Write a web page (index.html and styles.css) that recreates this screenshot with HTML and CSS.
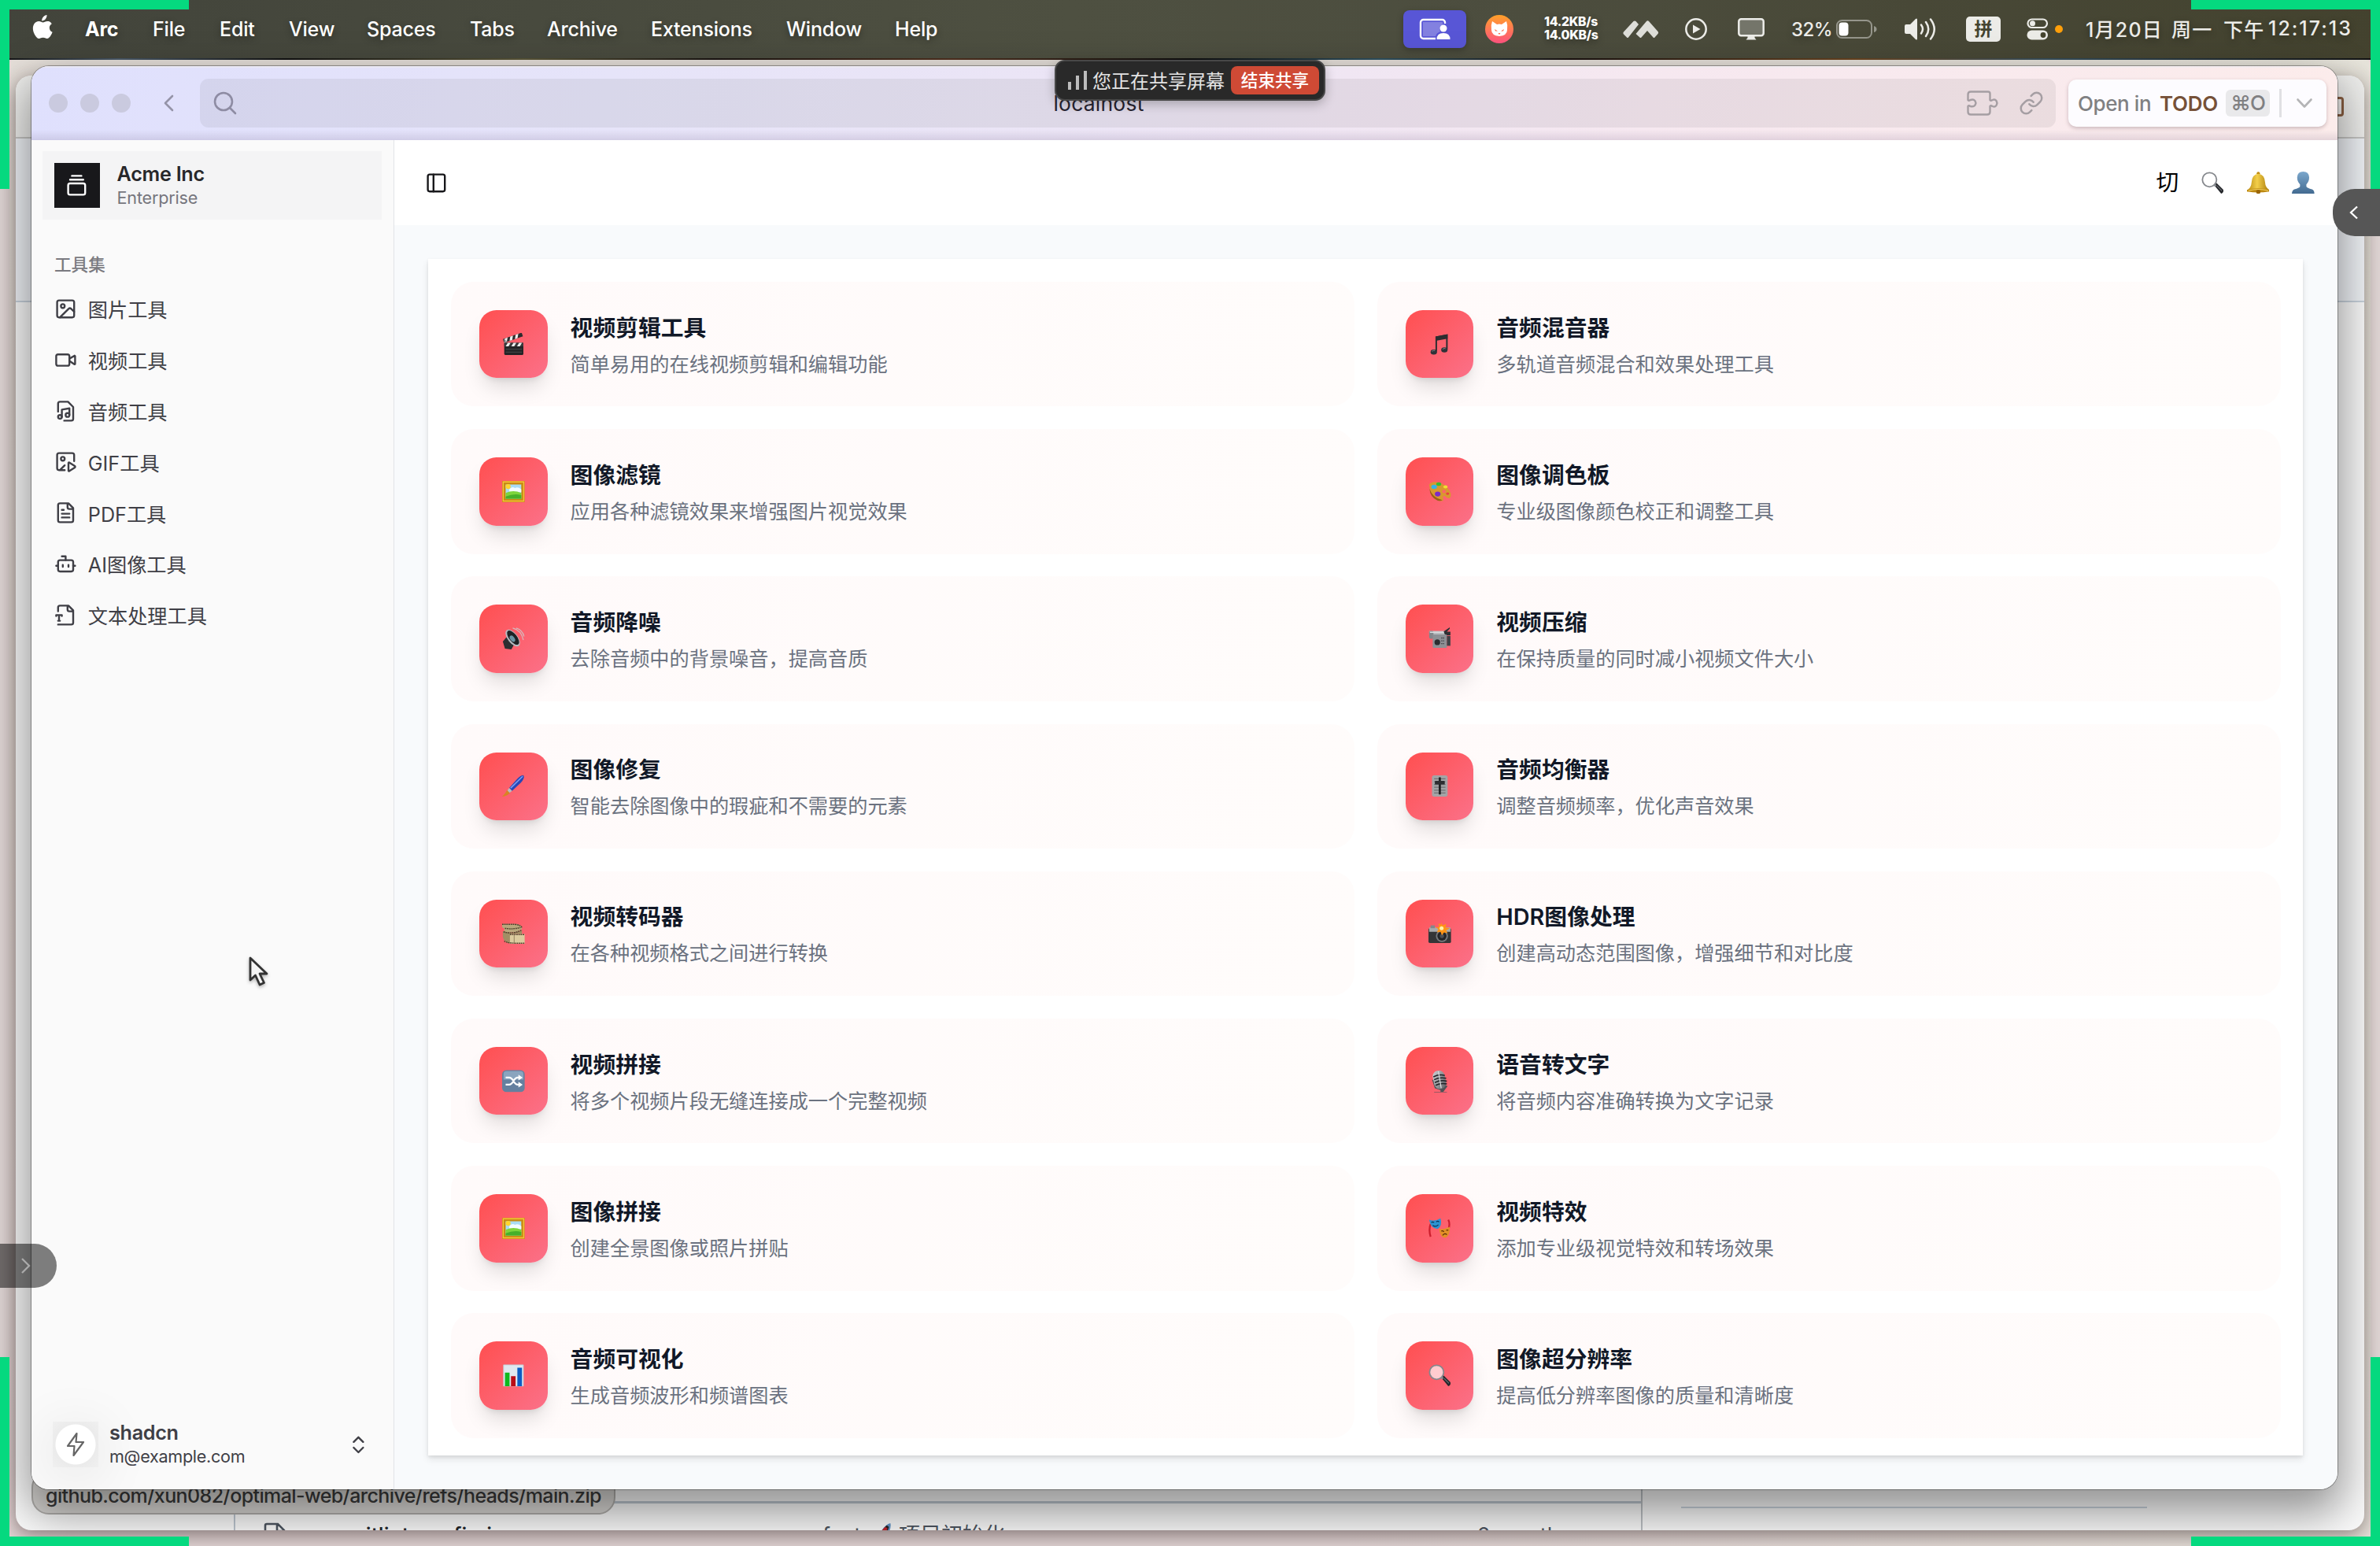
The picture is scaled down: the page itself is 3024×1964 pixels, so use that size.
FILE: index.html
```html
<!DOCTYPE html>
<html lang="zh-CN">
<head>
<meta charset="utf-8">
<title>Acme Inc</title>
<link rel="stylesheet" href="styles.css">
</head>
<body>
<svg class="defs" aria-hidden="true">
  <defs>
    <linearGradient id="gold" x1="0" y1="0" x2="1" y2="0"><stop offset="0" stop-color="#b98a12"/><stop offset=".45" stop-color="#f3cf4a"/><stop offset="1" stop-color="#a87808"/></linearGradient>
    <linearGradient id="person" x1="0" y1="0" x2="0" y2="1"><stop offset="0" stop-color="#7ba7cc"/><stop offset="1" stop-color="#41698f"/></linearGradient>
    <linearGradient id="steel" x1="0" y1="0" x2="1" y2="1"><stop offset="0" stop-color="#d4d6d9"/><stop offset="1" stop-color="#55585e"/></linearGradient>
    <linearGradient id="cat" x1="0" y1="0" x2="0" y2="1"><stop offset="0" stop-color="#ffa029"/><stop offset="1" stop-color="#ff5380"/></linearGradient>
  </defs>
  <symbol id="e-clapper" viewBox="0 0 32 32">
    <g transform="rotate(-19 4 14)"><rect x="3" y="8" width="28" height="5.5" fill="#2b2b2d"/><path d="M6 8h4l-3 5.5H3zM14 8h4l-3 5.5h-4zM22 8h4l-3 5.5h-4z" fill="#eee"/></g>
    <path d="M2 8l5 4-2 4z" fill="#8d8f92"/><rect x="3" y="14" width="27" height="17" rx="1.5" fill="#242426"/>
    <path d="M3 14h27v5H3z" fill="#3a3a3c"/><path d="M8 14h4l-3 5H5zM16 14h4l-3 5h-4zM24 14h4l-3 5h-4z" fill="#eee"/><path d="M5 23h23M5 27h23" stroke="#4d4d50"/>
  </symbol>
  <symbol id="e-note" viewBox="0 0 32 32"><path d="M11 26V6l15-3v20" fill="none" stroke="#2c2d30" stroke-width="2.2"/><path d="M10 5l17-3v6L10 11z" fill="#2c2d30"/><ellipse cx="7.500" cy="27" rx="4.500" ry="3.600" fill="#303238"/><ellipse cx="22.500" cy="24" rx="4.500" ry="3.600" fill="#303238"/><path d="M5 26q2-2 4-1M20 23q2-2 4-1" stroke="#8b8d92" fill="none"/></symbol>
  <symbol id="e-frame" viewBox="0 0 32 32"><path d="M0 1h32v30H0z" fill="#c98b12"/><path d="M1.500 2.500h29v27h-29z" fill="none" stroke="#f4c33a" stroke-width="1.500"/><path d="M5 6h22v20H5z" fill="#a9dcf5"/><circle cx="8.500" cy="9" r="3.500" fill="#ffd52e"/><path d="M10 13q4-5 8-2 5-2 9 2v4H10z" fill="#f3fbff"/><path d="M5 18q11-5 22 0v8H5z" fill="#7dd53c"/><path d="M5 23q12-5 22-2v5H5z" fill="#46b02a"/></symbol>
  <symbol id="e-palette" viewBox="0 0 32 32"><path d="M1 6Q5 1 14 3q14 4 17.500 16 1 6-3 6.500-4-.5-5-3-2.500-1-3 1-.5 2 1 4-2 3.500-8 1Q2 23 1 6z" fill="#d8982f"/><path d="M1.500 12q4 13 18 16-2 2-7 .5Q2 24 1.500 12z" fill="#9b6015"/><ellipse cx="22" cy="16" rx="2.500" ry="2.300" fill="#fb6269"/><ellipse cx="8" cy="9.500" rx="4" ry="3" fill="#35b4e6"/><ellipse cx="14.500" cy="5.500" rx="3.500" ry="2.500" fill="#39bb32"/><ellipse cx="24" cy="9.500" rx="3" ry="2.300" fill="#f2dc33"/><ellipse cx="13" cy="19.500" rx="4" ry="3.500" fill="#7c2bc8"/><ellipse cx="27" cy="19" rx="2.300" ry="1.800" fill="#e9403f"/></symbol>
  <symbol id="e-speaker" viewBox="0 0 32 32"><path d="M1 20l5-6 11 10-4 7-9-1z" fill="#2d2e31"/><ellipse cx="15" cy="15" rx="7" ry="14" transform="rotate(-38 15 15)" fill="#b6babf"/><ellipse cx="15.500" cy="14.500" rx="5.500" ry="12" transform="rotate(-38 15.500 14.500)" fill="#1f2124"/><ellipse cx="14.500" cy="16" rx="3" ry="5" transform="rotate(-38 14.500 16)" fill="#6b94a4"/><path d="M15 1q12 3 15 17M20 1q9 3 11 12" fill="none" stroke="#d5babd" stroke-width="1.300"/></symbol>
  <symbol id="e-video" viewBox="0 0 32 32"><path d="M1 5h24l2 5H1z" fill="#b8bbbf"/><path d="M21 6l9-6v2l-4 4h5v5h-7z" fill="#2e2f33"/><rect x="1" y="5" width="6" height="11" rx="2" fill="#83868b"/><rect x="6" y="10" width="20" height="19" rx="1.500" fill="#8d9095"/><path d="M2 7h20" stroke="#d9dbde" stroke-width="1.500"/><circle cx="12.500" cy="21" r="4" fill="#2b2c30"/><path d="M18 15h4M18 19h4M18 23h4" stroke="#3b3d42" stroke-width="1.500" stroke-dasharray="1.500 1"/><rect x="26" y="12" width="5" height="14" fill="#404247"/></symbol>
  <symbol id="e-brush" viewBox="0 0 32 32"><path d="M30.500 1.500q1.500 4-4 10L14 23l-4-4L21 6.500Q27 0 30.500 1.500z" fill="#2747b8"/><path d="M29 2.500L12 19" stroke="#7d9bf0" stroke-width="1.800"/><path d="M10 19l4 4-4 3-3-3z" fill="#b9bcc2"/><path d="M7 22l4 4q-4 4-11 5 4-3 7-9z" fill="#d98324"/></symbol>
  <symbol id="e-slider" viewBox="0 0 32 32"><rect x="5" y="1" width="22" height="30" rx="3" fill="#a3a4a6"/><path d="M8 6h16M8 10h16M8 14h16M8 18h16M8 22h16M8 26h16" stroke="#6f7073" stroke-width="1.300"/><path d="M16 4v24" stroke="#1f2022" stroke-width="3"/><rect x="9" y="9" width="14" height="5" rx="1" fill="#2c2d30"/></symbol>
  <symbol id="e-film" viewBox="0 0 32 32"><path d="M0 2h14q14-1 14 6-1 5-12 6H3V8q-2 0-3-2z" fill="#b9a77c"/><path d="M1 12q8 3 17 2 8-1 10-4v6H12v14Q2 28 1 20z" fill="#a18e64"/><path d="M11 16h21v14H11z" fill="#dccb9f"/><path d="M0 2.500h18q9 1 10 5M4 8q10 2 22-1M2 13q12 4 25-2M11 17h21M3 26q4 4 29 3" stroke="#493c29" stroke-width="1.600" stroke-dasharray="2 1" fill="none"/><path d="M17 17v12" stroke="#8e7d59"/></symbol>
  <symbol id="e-camera" viewBox="0 0 32 32"><rect x="0" y="8" width="32" height="21" rx="2" fill="#343537"/><path d="M1 7h30v6H1z" fill="#a9abad"/><rect x="3" y="4" width="6" height="4" fill="#85878a"/><circle cx="19" cy="19" r="8.500" fill="#787a7d"/><circle cx="19" cy="19" r="6.500" fill="#242528"/><circle cx="19" cy="19" r="3" fill="#4c4f56"/><path d="M18 0l2 4 5-2-1 5 6 1-5 3 2 4-5-1-3 4-2-5-5 1 2-5-4-2 5-1-1-5 4 2z" fill="#ff9416"/><circle cx="18.500" cy="8" r="2.800" fill="#fff2a8"/></symbol>
  <symbol id="e-shuffle" viewBox="0 0 32 32"><rect width="32" height="31" y=".5" rx="6" fill="#64809f"/><path d="M2 6q0-4 4-4h20q4 0 4 4v8H2z" fill="#8aa4be"/><path d="M5 11h5q3 0 6 5t6 5h3M5 21h5q3 0 6-5t6-5h3" fill="none" stroke="#fff" stroke-width="2.400"/><path d="M23 7l6 4-6 4zM23 17l6 4-6 4z" fill="#fff"/></symbol>
  <symbol id="e-mic" viewBox="0 0 32 32"><path d="M5 14l4 12 8 3v2H8v1h18v-1h-5l6-8" fill="#4f5256"/><rect x="7" y="1" width="17" height="26" rx="8" transform="rotate(-12 16 14)" fill="url(#steel)"/><path d="M7 10q8-4 16-2M8 14q8-4 17-2M9 18q8-4 17-2M10 22q8-4 16-2" fill="none" stroke="#202226" stroke-width="1.700"/><path d="M14 2l4 24" stroke="#e4e5e7" stroke-width="1.200"/></symbol>
  <symbol id="e-masks" viewBox="0 0 32 32"><path d="M3 10q-3 8 0 18M28 4q3 6 0 14" fill="none" stroke="#cc1e2d" stroke-width="2.500"/><path d="M1 4q8 3 16-2 3 10-4 15Q3 17 1 4z" fill="#2b93d1"/><path d="M4 8q2-2 4 0M11 7q2-2 4 0M6 12q4 3 8-1" fill="none" stroke="#0d3158" stroke-width="1.300"/><path d="M15 17q7 1 15-3 1 11-5 15-8 2-10-12z" fill="#e39027"/><path d="M18 20q2-1 4 1M25 19q2-1 3 0M20 26q3-4 6-1" fill="none" stroke="#5e2c08" stroke-width="1.300"/></symbol>
  <symbol id="e-chart" viewBox="0 0 32 32"><path d="M2 1h28v30H2z" fill="#dfe8f0"/><path d="M2 1h28v30H2z" fill="none" stroke="#c3cbd3"/><path d="M4 12h6.500v19H4z" fill="#10b81e"/><path d="M12.500 17H19v14h-6.500z" fill="#b90c16"/><path d="M21.500 5H28v26h-6.500z" fill="#0b5cc4"/></symbol>
  <symbol id="e-search" viewBox="0 0 32 32"><path d="M18 19l3.500-3L31 25.500q1 4-3 5.500z" fill="#25272b"/><path d="M17.500 17.500l3 3" stroke="#888b90" stroke-width="3"/><circle cx="11.500" cy="11.500" r="10" fill="#fff" fill-opacity=".68" stroke="#85888d" stroke-width="2"/><path d="M22 20l7 7" stroke="#6a6d72" stroke-width="1.200"/></symbol>
  <symbol id="e-bell" viewBox="0 0 32 32"><circle cx="16" cy="2.500" r="2.300" fill="#c08d12"/><path d="M16 3q9 1 9.500 12 .5 8 6.500 11v2H0v-2q6-3 6.500-11Q7 4 16 3z" fill="url(#gold)"/><path d="M0 26q16-5 32 0v2q-16 3-32 0z" fill="#bd8810"/><path d="M2 27q14-4 28 0" fill="none" stroke="#f4d465" stroke-width="1.200"/><circle cx="16" cy="28.500" r="3" fill="#9b6708"/></symbol>
  <symbol id="e-person" viewBox="0 0 32 32"><path d="M16 0q8 0 8.500 8 0 6-4 10v3q1 2 8 4 3.500 1.500 3.500 7H0q0-5.500 3.500-7 7-2 8-4v-3q-4-4-4-10Q8 0 16 0z" fill="url(#person)"/></symbol>
</svg>

<div class="desktop">
  <header class="menubar">
    <nav class="menus">
      <svg class="apple" viewBox="0 0 28 34"><path fill="#fff" d="M19.500 1c.2 2-.6 3.900-1.700 5.200-1.200 1.400-3 2.300-4.600 2.200-.2-1.900.7-3.800 1.800-5C16.200 2.100 18 1.200 19.500 1zM25.800 12.200c-2 1.200-3 2.800-3 5.100 0 2.600 1.500 4.600 3.800 5.500-.5 1.500-1.200 3-2.200 4.400-1.300 1.900-2.600 3.800-4.700 3.800-2 0-2.600-1.200-5-1.200s-3.200 1.200-5.100 1.300c-2 .1-3.500-2-4.900-4C2 23 .6 16.800 3.300 12.600c1.300-2.200 3.700-3.500 6.100-3.500 2.200 0 3.900 1.400 5.300 1.400 1.300 0 3.400-1.600 6-1.400 1.100 0 3.500.4 5.100 3.100z"/></svg>
      <b>Arc</b><span>File</span><span>Edit</span><span>View</span><span>Spaces</span><span>Tabs</span><span>Archive</span><span>Extensions</span><span>Window</span><span>Help</span>
    </nav>
    <div class="status">
      <span class="sharebadge"><svg width="40" height="28" viewBox="0 0 40 28"><path d="M33 7V5.500A3.500 3.500 0 0 0 29.500 2h-24A3.500 3.500 0 0 0 2 5.500v17A3.500 3.500 0 0 0 5.500 26H21" fill="none" stroke="#fff" stroke-width="2.400"/><path d="M5 5h25v3q-5 5-3 9-5 2-6 6H5z" fill="#8381e0"/><circle cx="31" cy="13" r="4.500" fill="#fff"/><path d="M22.500 27q0-8 8.500-8t8.500 8z" fill="#fff"/></svg></span>
      <svg class="cat" width="36" height="36" viewBox="0 0 36 36"><circle cx="18" cy="18" r="18" fill="url(#cat)"/><path d="M9 8l6 4q3-1 6 0l6-4q2 5 1 11 0 7-10 8-10-1-10-8-1-6 1-11z" fill="#fff"/><path d="M12 18l4 2.500h-3zM24 18l-4 2.500h3zM16.500 23h3L18 25z" fill="#ff6a48"/></svg>
      <span class="speed">14.2KB/s<br>14.0KB/s</span>
      <svg width="46" height="24" viewBox="0 0 46 24"><path d="M1 15.500L13.500 2q1.500-1.200 3 0l3.500 4L7 22.500q-1 1-2 0l-4-4q-1.200-1.500 0-3zM16.500 18L30 2q1.500-1.500 3 0l11.500 13q1.200 1.500 0 3l-4 4.500q-1 1-2 0L31 14l-7.500 8.500q-1 1-2 0z" fill="#deded9"/></svg>
      <svg width="30" height="30" viewBox="0 0 30 30"><circle cx="15" cy="15" r="12.700" fill="none" stroke="#ecece8" stroke-width="2.500"/><path d="M11 9.500l9.500 5.500-9.500 5.500z" fill="#ecece8"/></svg>
      <svg width="36" height="30" viewBox="0 0 36 30"><rect x="2.300" y="2.300" width="31.400" height="21" rx="3" fill="#74756a" stroke="#ecece8" stroke-width="2.500"/><path d="M13.500 23h9v3l2 2.500h-13l2-2.500z" fill="#ecece8"/></svg>
      <span class="pct">32%</span>
      <svg width="54" height="26" viewBox="0 0 54 26"><rect x="2" y="2" width="44" height="22" rx="6.500" fill="none" stroke="#96968c" stroke-width="2"/><rect x="4.500" y="4.500" width="12" height="17" rx="4" fill="#fff"/><path d="M49 9q3.500 1 3.500 4T49 17z" fill="#96968c"/></svg>
      <svg width="42" height="30" viewBox="0 0 42 30"><path d="M1 11q0-2 2-2h5l7-7q2-1.500 2 1v24q0 2.500-2 1l-7-7H3q-2 0-2-2z" fill="#ecece8"/><path d="M22 9.500q4 5.500 0 11M28 6q6.500 9 0 18M34 2.500q9.500 12.500 0 25" fill="none" stroke="#ecece8" stroke-width="2.500" stroke-linecap="round"/></svg>
      <span class="ime">拼</span>
      <svg width="28" height="28" viewBox="0 0 28 28"><rect x="1.500" y="1.500" width="24.500" height="10.500" rx="5.250" fill="none" stroke="#ecece8" stroke-width="2.200"/><circle cx="7.500" cy="6.800" r="3.500" fill="#ecece8"/><rect x=".5" y="15.500" width="26.500" height="12" rx="6" fill="#ecece8"/><circle cx="21" cy="21.500" r="3.400" fill="#45442f"/></svg>
      <i class="dot"></i>
      <span class="date">1月20日</span><span class="date">周一</span><span class="date">下午</span><span class="date clock">12:17:13</span>
    </div>
  </header>
  <div class="wallpaper"></div>

  <section class="backwin">
    <div class="backpage">
      <div class="backbar"><i class="backicon"></i></div>
      <div class="backhead"></div>
      <div class="backbody">
        <div class="backleft"></div>
        <div class="backfiles">
          <div class="filerow">
            <svg width="28" height="32" viewBox="0 0 28 32"><path d="M2 32V4q0-2 2-2h14l8 8v22M17 2v9h9" fill="none" stroke="#4d5560" stroke-width="2.600"/></svg>
            <span class="fname">commitlint.config.js</span>
            <span class="fmsg">feat: <svg class="rocket" viewBox="0 0 24 32"><path d="M22 1q2 9-8 21l-7-6Q14 3 22 1z" fill="#5f93c8"/><path d="M17 4q-6 5-9 14l4 3q6-7 8-15z" fill="#26211f"/><path d="M15 6q-6 5-8 14l4 2q5-7 7-14z" fill="#c2232a"/><path d="M7 15l8 7-3 8H4z" fill="#26211f"/></svg>项目初始化</span>
            <span class="fdate">2 months ago</span>
          </div>
        </div>
        <div class="backside"><hr></div>
      </div>
    </div>
    <div class="linkstatus">github.com/xun082/optimal-web/archive/refs/heads/main.zip</div>
  </section>

  <main class="window">
    <div class="toolbar">
      <div class="lights"><i></i><i></i><i></i></div>
      <svg class="back" width="16" height="24" viewBox="0 0 16 24"><path d="M13 3L4 12l9 9" fill="none" stroke="#9594a8" stroke-width="2.600" stroke-linecap="round" stroke-linejoin="round"/></svg>
      <div class="urlbar">
        <svg width="30" height="30" viewBox="0 0 30 30"><circle cx="13" cy="13" r="11" fill="none" stroke="#8e8ca3" stroke-width="2.600"/><path d="M21 21l7 7" stroke="#8e8ca3" stroke-width="2.600" stroke-linecap="round"/></svg>
        <span class="host">localhost</span>
        <svg class="puzzle" width="40" height="32" viewBox="0 0 40 32"><path d="M1.500 12V5q0-3.500 3.500-3.500h22q2.500 0 2.500 2.500v8q1 1.500 3 0 5-2 6 4-1 6-6 4-2-1.500-3 0v7q0 3.500-3.500 3.500H5q-3.500 0-3.500-3.500v-7q1-1.500 3 0 6 1.500 7-4-1-6-7-4-2 1.500-3 0z" fill="none" stroke="#a59ea3" stroke-width="2.400"/></svg>
        <svg class="link" width="32" height="32" viewBox="0 0 24 24"><path d="M10 13a5 5 0 0 0 7.540.540l3-3a5 5 0 0 0-7.070-7.070l-1.720 1.710M14 11a5 5 0 0 0-7.540-.540l-3 3a5 5 0 0 0 7.070 7.070l1.710-1.710" fill="none" stroke="#a59ea3" stroke-width="1.900" stroke-linecap="round"/></svg>
      </div>
      <div class="openin">
        <span>Open in</span><b>TODO</b><kbd>⌘O</kbd><i class="sep"></i>
        <svg width="22" height="14" viewBox="0 0 22 14"><path d="M2.500 2.500l8.500 9 8.500-9" fill="none" stroke="#b4b4b6" stroke-width="2.600" stroke-linecap="round" stroke-linejoin="round"/></svg>
      </div>
    </div>

    <div class="app">
      <aside class="sidebar">
        <div class="team">
          <span class="logo"><svg class="ico" viewBox="0 0 24 24"><path d="M7 2h10M5 6h14"/><rect x="3" y="10" width="18" height="12" rx="2"/></svg></span>
          <div><p class="name">Acme Inc</p><p class="sub">Enterprise</p></div>
        </div>
        <p class="label">工具集</p>
        <ul class="nav">
          <li><svg class="ico" viewBox="0 0 24 24"><rect x="3" y="3" width="18" height="18" rx="2"/><circle cx="9" cy="9" r="2"/><path d="m21 15-3.086-3.086a2 2 0 0 0-2.828 0L6 21"/></svg>图片工具</li>
          <li><svg class="ico" viewBox="0 0 24 24"><path d="m16 13 5.223 3.482a.5.5 0 0 0 .777-.416V7.870a.5.5 0 0 0-.752-.432L16 10.500"/><rect x="2" y="6" width="14" height="12" rx="2"/></svg>视频工具</li>
          <li><svg class="ico" viewBox="0 0 24 24"><circle cx="14" cy="16" r="2"/><circle cx="6" cy="18" r="2"/><path d="M4 12.400V4a2 2 0 0 1 2-2h8.500L20 7.500V20a2 2 0 0 1-2 2h-7.500M8 18v-7.700L16 9v7"/></svg>音频工具</li>
          <li><svg class="ico" viewBox="0 0 24 24"><path d="m11 16-5 5M11 21H5a2 2 0 0 1-2-2V5a2 2 0 0 1 2-2h14a2 2 0 0 1 2 2v6.500"/><path d="M15.765 22a.5.5 0 0 1-.765-.424V13.380a.5.5 0 0 1 .765-.424l5.878 3.674a1 1 0 0 1 0 1.696z"/><circle cx="9" cy="9" r="2"/></svg>GIF工具</li>
          <li><svg class="ico" viewBox="0 0 24 24"><path d="M15 2H6a2 2 0 0 0-2 2v16a2 2 0 0 0 2 2h12a2 2 0 0 0 2-2V7ZM14 2v4a2 2 0 0 0 2 2h4M10 9H8M16 13H8M16 17H8"/></svg>PDF工具</li>
          <li><svg class="ico" viewBox="0 0 24 24"><path d="M12 8V4H8M2 14h2M20 14h2M15 13v2M9 13v2"/><rect x="4" y="8" width="16" height="12" rx="2"/></svg>AI图像工具</li>
          <li><svg class="ico" viewBox="0 0 24 24"><path d="M4 22h14a2 2 0 0 0 2-2V7l-5-5H6a2 2 0 0 0-2 2v4M14 2v4a2 2 0 0 0 2 2h4M2 13v-1h6v1M5 12v6M4 18h2"/></svg>文本处理工具</li>
        </ul>
        <div class="user">
          <span class="avatar"><svg width="28" height="34" viewBox="0 0 28 34"><path d="M15.500 3L4 19h8.500l-1 12L24 14h-9.500z" fill="none" stroke="#666" stroke-width="2.200" stroke-linejoin="round"/></svg></span>
          <div><p class="name">shadcn</p><p class="mail">m@example.com</p></div>
          <svg class="ico" viewBox="0 0 24 24"><path d="m7 15 5 5 5-5M7 9l5-5 5 5"/></svg>
        </div>
      </aside>

      <section class="content">
        <header class="apphead">
          <svg class="ico" viewBox="0 0 24 24"><rect x="3" y="3" width="18" height="18" rx="2"/><path d="M9 3v18"/></svg>
          <div class="actions"><span>切</span><svg><use href="#e-search"/></svg><svg><use href="#e-bell"/></svg><svg><use href="#e-person"/></svg></div>
        </header>
        <div class="stage">
          <div class="panel">
            <article class="card"><span class="tile"><svg><use href="#e-clapper"/></svg></span><div><h3>视频剪辑工具</h3><p>简单易用的在线视频剪辑和编辑功能</p></div></article>
            <article class="card"><span class="tile"><svg><use href="#e-note"/></svg></span><div><h3>音频混音器</h3><p>多轨道音频混合和效果处理工具</p></div></article>
            <article class="card"><span class="tile"><svg><use href="#e-frame"/></svg></span><div><h3>图像滤镜</h3><p>应用各种滤镜效果来增强图片视觉效果</p></div></article>
            <article class="card"><span class="tile"><svg><use href="#e-palette"/></svg></span><div><h3>图像调色板</h3><p>专业级图像颜色校正和调整工具</p></div></article>
            <article class="card"><span class="tile"><svg><use href="#e-speaker"/></svg></span><div><h3>音频降噪</h3><p>去除音频中的背景噪音，提高音质</p></div></article>
            <article class="card"><span class="tile"><svg><use href="#e-video"/></svg></span><div><h3>视频压缩</h3><p>在保持质量的同时减小视频文件大小</p></div></article>
            <article class="card"><span class="tile"><svg><use href="#e-brush"/></svg></span><div><h3>图像修复</h3><p>智能去除图像中的瑕疵和不需要的元素</p></div></article>
            <article class="card"><span class="tile"><svg><use href="#e-slider"/></svg></span><div><h3>音频均衡器</h3><p>调整音频频率，优化声音效果</p></div></article>
            <article class="card"><span class="tile"><svg><use href="#e-film"/></svg></span><div><h3>视频转码器</h3><p>在各种视频格式之间进行转换</p></div></article>
            <article class="card"><span class="tile"><svg><use href="#e-camera"/></svg></span><div><h3>HDR图像处理</h3><p>创建高动态范围图像，增强细节和对比度</p></div></article>
            <article class="card"><span class="tile"><svg><use href="#e-shuffle"/></svg></span><div><h3>视频拼接</h3><p>将多个视频片段无缝连接成一个完整视频</p></div></article>
            <article class="card"><span class="tile"><svg><use href="#e-mic"/></svg></span><div><h3>语音转文字</h3><p>将音频内容准确转换为文字记录</p></div></article>
            <article class="card"><span class="tile"><svg><use href="#e-frame"/></svg></span><div><h3>图像拼接</h3><p>创建全景图像或照片拼贴</p></div></article>
            <article class="card"><span class="tile"><svg><use href="#e-masks"/></svg></span><div><h3>视频特效</h3><p>添加专业级视觉特效和转场效果</p></div></article>
            <article class="card"><span class="tile"><svg><use href="#e-chart"/></svg></span><div><h3>音频可视化</h3><p>生成音频波形和频谱图表</p></div></article>
            <article class="card"><span class="tile"><svg><use href="#e-search"/></svg></span><div><h3>图像超分辨率</h3><p>提高低分辨率图像的质量和清晰度</p></div></article>
          </div>
        </div>
      </section>
    </div>
  </main>

  <div class="sharing">
    <svg width="26" height="26" viewBox="0 0 26 26"><path d="M1 15h4v10H1zM11 7h4v18h-4zM21 1h4v24h-4z" fill="#bcbcbc"/></svg>
    <span>您正在共享屏幕</span><button>结束共享</button>
  </div>
  <div class="edge right"><svg width="14" height="20" viewBox="0 0 14 20"><path d="M11 2.500L3 10l8 7.500" fill="none" stroke="#fff" stroke-width="2.300"/></svg></div>
  <div class="edge left"><svg width="14" height="22" viewBox="0 0 14 22"><path d="M2 2l9 9-9 9" fill="none" stroke="#aaa" stroke-width="2.300"/></svg></div>
  <svg class="cursor" width="28" height="42" viewBox="0 0 28 42"><path d="M3 3v28l6.500-6 5.500 12 5.500-2.500-5.500-11.500h9z" fill="#f4f4f4" stroke="#333" stroke-width="2.800" stroke-linejoin="round"/></svg>
  <i class="corner tl"></i><i class="corner tr"></i><i class="corner bl"></i><i class="corner br"></i>
</div>
</body>
</html>
```
FILE: styles.css
```css
* { box-sizing: border-box; }
body, p, h3, ul { margin: 0; padding: 0; }
body { font-family: Inter, "Noto Sans CJK SC", sans-serif; color: #3f3f46; }
svg { display: block; flex: none; }
.defs { position: absolute; width: 0; height: 0; }
.desktop { position: relative; width: 3024px; height: 1964px; overflow: hidden; background: #e3d9d8; display: flex; flex-direction: column; }

/* menu bar */
.menubar { height: 74px; flex: none; display: flex; justify-content: space-between; background: linear-gradient(90deg, #42443b, #4e5041 45%, #4c4d3e 65%, #43422e); color: #fff; font-size: 25px; font-weight: 500; letter-spacing: -0.2px; text-shadow: 0 3px 8px rgba(0,0,0,.35); white-space: nowrap; }
.menus { display: grid; grid-template-columns: 68px 86px 85px 88px 99px 131px 98px 132px 172px 138px 80px; align-items: center; padding-left: 40px; }
.menus b { font-weight: 700; }
.apple { width: 28px; height: 34px; margin-top: -4px; }
.status { display: grid; grid-template-columns: 104px 75px 100px 78px 67px 69px 56px 87px 79px 77px 36px 39px 109px 66px 57px 142px; align-items: center; color: #ecece8; }
.sharebadge { width: 80px; height: 48px; border-radius: 8px; background: #5856d6; display: grid; place-items: center; box-shadow: 0 3px 8px rgba(0,0,0,.25); }
.speed { font-size: 15.8px; font-weight: 800; line-height: 17px; color: #fff; letter-spacing: -.3px; margin-top: -2px; }
.pct { font-size: 24px; letter-spacing: -.6px; }
.ime { width: 44px; height: 32px; border-radius: 5px; background: #ecece8; color: #45442f; font-size: 23px; line-height: 32px; text-align: center; font-weight: 700; text-shadow: none; }
.dot { width: 10px; height: 10px; border-radius: 50%; background: #ff9f0a; }
.date { margin-top: -3px; letter-spacing: 1.2px; }
.clock { letter-spacing: 2px; }
.wallpaper { height: 2px; flex: none; background: linear-gradient(90deg, #111, #4a5a6a 5%, #111 12%, #5a5638 22%, #1a1412 30%, #50301e 40%, #111 50%, #2e5262 58%, #1a1210 66%, #6a4420 78%, #37505e 86%, #111); }

/* window behind */
.backwin { position: absolute; left: 12px; top: 76px; width: 3000px; height: 1888px; padding: 20px 8px; background: linear-gradient(100deg, rgba(228,205,205,0) 60%, rgba(232,235,220,.5)), linear-gradient(#e6e0da, #e5dcd6 45%, #e2d5d5); border-radius: 6px 6px 0 0; }
.backpage { height: 1848px; border-radius: 20px; overflow: hidden; background: #fafafa; display: flex; flex-direction: column; box-shadow: 0 6px 22px rgba(60,40,40,.45); }
.backbar { height: 80px; border-bottom: 2px solid #c6c6c4; background: #efefed; display: flex; align-items: center; justify-content: flex-end; padding-right: 26px; }
.backicon { width: 30px; height: 25px; border: 3px solid #8a5f42; border-radius: 4px; }
.backhead { height: 208px; background: #f0f3f7; border-bottom: 2px solid #c8d2dc; }
.backbody { flex: 1; display: grid; grid-template-columns: 277px 1790px 1fr; }
.backfiles { border-left: 2px solid #bcc5cf; border-right: 2px solid #bcc0c4; display: flex; flex-direction: column; justify-content: flex-end; }
.filerow { height: 37px; border-top: 3px solid #bcc5cf; padding: 24px 0 0 36px; display: grid; grid-template-columns: 50px 660px 832px 1fr; white-space: nowrap; overflow: hidden; font-size: 27px; line-height: 34px; color: #4d5560; }
.fname { color: #22262b; font-weight: 500; }
.fmsg { display: flex; gap: 8px; }
.rocket { width: 24px; height: 30px; }
.backside { display: flex; align-items: flex-end; padding: 0 276px 28px 49px; }
.backside hr { flex: 1; margin: 0; border: 0; height: 2px; background: #c8d2dc; }
.linkstatus { position: absolute; left: 28px; bottom: 40px; height: 56px; width: 742px; border: 2px solid #b1afac; border-radius: 22px; background: #d8d6d3; color: #3a3a3a; font-size: 25px; font-weight: 500; letter-spacing: -.6px; line-height: 30px; padding: 15px 16px 0; white-space: nowrap; }

/* main window */
.window { position: absolute; left: 40px; top: 84px; width: 2930px; height: 1808px; border-radius: 22px; overflow: hidden; display: flex; flex-direction: column; background: #fff; box-shadow: 0 0 0 1px rgba(0,0,0,.32), 0 24px 56px 6px rgba(0,0,0,.42); }
.toolbar { height: 94px; flex: none; display: flex; align-items: center; padding: 0 14px 2px 22px; background: linear-gradient(transparent 86%, rgba(90,70,110,.14)), linear-gradient(100deg, #dfe0fd, #e6e4f9 25%, #ece5f5 48%, #f6e8f0 70%, #fceceb); border-top: 2px solid rgba(255,255,255,.55); }
.lights { display: flex; gap: 16px; }
.lights i { width: 24px; height: 24px; border-radius: 50%; background: #cacadf; }
.back { margin-left: 40px; }
.urlbar { margin-left: 32px; width: 2358px; height: 62px; border-radius: 11px; background: rgba(50,50,60,.075); display: flex; align-items: center; padding: 0 15px 0 17px; }
.host { flex: 1; text-align: center; font-size: 26.5px; color: #262330; letter-spacing: .2px; margin-left: -8px; }
.link { margin-left: 26px; }
.openin { margin-left: auto; width: 328px; height: 60px; border-radius: 10px; background: #fdfcff; box-shadow: 0 2px 5px rgba(80,50,60,.28); display: flex; align-items: center; padding-left: 12px; font-size: 26px; font-weight: 500; color: #808082; white-space: nowrap; }
.openin span { width: 104px; letter-spacing: -.4px; }
.openin b { width: 84px; font-weight: 600; letter-spacing: -.3px; color: #765138; }
.openin kbd { width: 56px; height: 34px; border-radius: 6px; background: #e9e9eb; font: 500 26px/34px Inter, "DejaVu Sans", sans-serif; text-align: center; letter-spacing: -1px; }
.sep { width: 3px; height: 36px; margin: 0 18px 0 12px; background: #e0e0e3; }

.app { flex: 1; display: flex; min-height: 0; }
.ico { width: 28.8px; height: 28.8px; fill: none; stroke: currentColor; stroke-width: 2; stroke-linecap: round; stroke-linejoin: round; }
.sidebar { width: 461px; flex: none; background: #fafafa; border-right: 1px solid #e2e4e8; padding: 14px; display: flex; flex-direction: column; }
.team { width: 431px; height: 87px; background: #f4f4f5; display: flex; align-items: center; gap: 22px; padding-left: 15px; }
.logo { width: 57.6px; height: 57.6px; background: #18181b; color: #fff; display: grid; place-items: center; }
.name { font-size: 25.2px; line-height: 31px; font-weight: 600; letter-spacing: -.3px; }
.team .name { color: #27272a; }
.sub { font-size: 21.6px; line-height: 29px; color: #76767d; letter-spacing: -.2px; }
.label { margin: 28px 0 0 15px; height: 58px; line-height: 58px; font-size: 21.6px; font-weight: 500; color: #7a7a80; }
.nav { list-style: none; display: flex; flex-direction: column; }
.nav li { height: 64.8px; display: flex; align-items: center; gap: 14px; padding-left: 15px; font-size: 25.2px; }
.nav li:first-child { margin-top: -5px; }
.user { margin-top: auto; height: 86px; display: flex; align-items: center; gap: 14px; padding: 0 16px 0 13px; }
.user > .ico { margin-left: auto; }
.user .mail { letter-spacing: -.3px; }
.avatar { width: 58px; height: 58px; background: radial-gradient(circle, #fff 25px, #ebebeb 26px, #f0f0f0 100%); box-shadow: 0 10px 70px rgba(0,0,0,.1); display: grid; place-items: center; }
.mail { font-size: 21.6px; line-height: 29px; }

.content { flex: 1; min-width: 0; display: flex; flex-direction: column; background: #f8fafc; }
.apphead { height: 108px; flex: none; background: #fff; display: flex; align-items: center; justify-content: space-between; padding: 0 29px 0 39px; color: #18181b; }
.actions { display: flex; align-items: center; gap: 28.8px; font-size: 28.8px; line-height: 36px; color: #000; }
.actions svg { width: 28.8px; height: 28.8px; }
.stage { flex: 1; padding: 43px 44px 43px 43px; }
.panel { height: 1520px; background: #fff; box-shadow: 0 5px 9px rgba(0,0,0,.09), 0 2px 4px rgba(0,0,0,.08); padding: 29px 28px 0 29.4px; display: grid; grid-template-columns: 1fr 1fr; grid-auto-rows: 158.4px; gap: 28.8px; align-content: start; }
.card { border-radius: 28.8px; padding: 0 36px; display: flex; align-items: center; gap: 28.8px; background: linear-gradient(100deg, #fffafa, #fffcfb); }
.tile { width: 86.4px; height: 86.4px; border-radius: 21.6px; background: linear-gradient(135deg, #ff4f50, #fb7189); display: grid; place-items: center; box-shadow: 0 16px 26px -5px rgba(0,0,0,.13), 0 6px 10px -6px rgba(0,0,0,.14); }
.tile svg { width: 28.8px; height: 28.8px; }
.card h3 { padding-top: 4px; font-size: 28.8px; line-height: 48px; font-weight: 600; color: #111827; }
.card p { font-size: 25.2px; line-height: 45px; color: #6b7280; }

/* overlays */
.sharing { position: absolute; left: 1340px; top: 76px; width: 344px; height: 52px; border: 2px solid #484848; border-radius: 13px; background: #292929; display: flex; align-items: center; padding: 0 6px 0 14px; color: #e4e4e4; font-size: 24px; box-shadow: 0 4px 14px rgba(0,0,0,.25); white-space: nowrap; }
.sharing span { margin: -2px 0 0 6px; }
.sharing button { margin-left: auto; width: 112px; height: 36px; border: 0; border-radius: 8px; background: #cf4a35; color: #fff; font: 500 21.6px/34px Inter, "Noto Sans CJK SC", sans-serif; padding: 0; }
.edge { position: absolute; display: flex; align-items: center; }
.edge.right { right: 0; top: 240px; width: 60px; height: 60px; border-radius: 28px 0 0 28px; background: #565656; padding-left: 20px; }
.edge.left { left: 0; top: 1580px; width: 72px; height: 56px; border-radius: 0 28px 28px 0; background: rgba(0,0,0,.5); padding-left: 26px; }
.cursor { position: absolute; left: 315px; top: 1214px; filter: drop-shadow(0 2px 2px rgba(0,0,0,.3)); }
.corner { position: absolute; width: 240px; height: 240px; border: 0 solid #05d97f; }
.tl { left: 0; top: 0; border-width: 12px 0 0 12px; }
.tr { right: 0; top: 0; border-width: 12px 12px 0 0; }
.bl { left: 0; bottom: 0; border-width: 0 0 12px 12px; }
.br { right: 0; bottom: 0; border-width: 0 12px 12px 0; }
```
